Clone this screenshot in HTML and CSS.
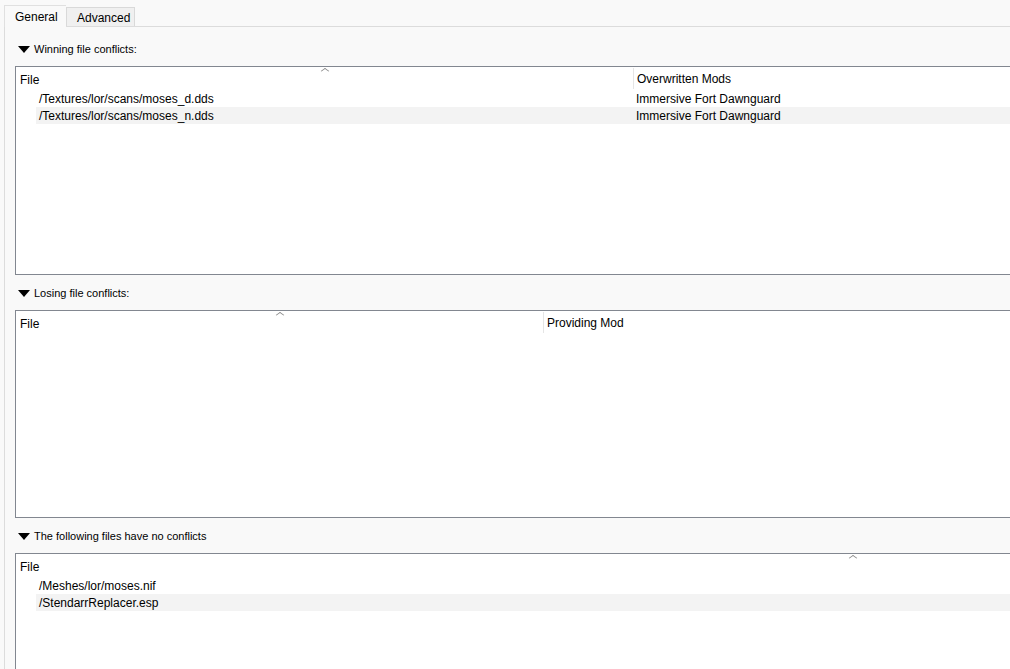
FILE: index.html
```html
<!DOCTYPE html>
<html lang="en">
<head>
    <meta charset="UTF-8">
    <meta name="viewport" content="width=device-width, initial-scale=1.0">
    <title>Conflicts</title>
    <link rel="stylesheet" href="styles.css">
</head>
<body>

<div class="tabs">
    <div class="tab active">General</div>
    <div class="tab">Advanced</div>
</div>

<div class="pane">
    <div class="section-title"><span class="arrow"></span>Winning file conflicts:</div>
    <div class="list">
        <div class="list-head">
            <div class="head-cell col-win">File<span class="sort"></span></div>
            <div class="head-cell col-rest">Overwritten Mods</div>
        </div>
        <div class="row">
            <div class="cell col-win"><span class="item">/Textures/lor/scans/moses_d.dds</span></div>
            <div class="cell col-rest">Immersive Fort Dawnguard</div>
        </div>
        <div class="row alt">
            <div class="cell col-win"><span class="item">/Textures/lor/scans/moses_n.dds</span></div>
            <div class="cell col-rest">Immersive Fort Dawnguard</div>
        </div>
    </div>

    <div class="section-title"><span class="arrow"></span>Losing file conflicts:</div>
    <div class="list list-short">
        <div class="list-head">
            <div class="head-cell col-lose">File<span class="sort"></span></div>
            <div class="head-cell col-rest">Providing Mod</div>
        </div>
    </div>

    <div class="section-title"><span class="arrow"></span>The following files have no conflicts</div>
    <div class="list list-last">
        <div class="list-head">
            <div class="head-cell col-none">File<span class="sort"></span></div>
        </div>
        <div class="row">
            <div class="cell col-none"><span class="item">/Meshes/lor/moses.nif</span></div>
        </div>
        <div class="row alt">
            <div class="cell col-none"><span class="item">/StendarrReplacer.esp</span></div>
        </div>
    </div>
</div>

</body>
</html>
```

FILE: styles.css
```css
body {
    margin: 0;
    background-color: #f9f9f9;
    color: #000000;
    font-family: "Liberation Sans", Arial, sans-serif;
    font-size: 12px;
    overflow: hidden;
    height: 669px;
}

.tabs {
    display: flex;
    align-items: flex-end;
    height: 27px;
    padding-left: 4px;
    box-sizing: border-box;
}

.tab {
    height: 18px;
    line-height: 21px;
    padding: 0 10px;
    width: 47px;
    background-color: #f0f0f0;
    border: 1px solid #d9d9d9;
    border-bottom: none;
    margin-bottom: 1px;
    text-align: center;
}

.tab.active {
    height: 21px;
    line-height: 23px;
    width: 41px;
    background-color: #f9f9f9;
    border-color: #e0e0e0;
    border-right: none;
    margin-bottom: 0;
    position: relative;
    z-index: 1;
}

.pane {
    margin-left: 4px;
    margin-top: -1px;
    width: 1100px;
    border-top: 1px solid #dcdcdc;
    border-left: 1px solid #dcdcdc;
    padding: 4px 0 0 10px;
    height: 700px;
}

.section-title {
    display: flex;
    align-items: center;
    height: 35px;
    padding-top: 1px;
    box-sizing: border-box;
    font-size: 11px;
}

.arrow {
    width: 0;
    height: 0;
    border-left: 6px solid transparent;
    border-right: 6px solid transparent;
    border-top: 7px solid #000000;
    margin: 0 4px 0 3px;
}

.list {
    height: 209px;
    box-sizing: border-box;
    border: 1px solid #828790;
    background-color: #ffffff;
    overflow: hidden;
}

.list-short {
    height: 208px;
}

.list-last {
    height: 200px;
}

.list-head {
    display: flex;
    height: 23px;
}

.head-cell {
    position: relative;
    height: 23px;
    line-height: 23px;
    padding: 2px 0 0 4px;
    box-sizing: border-box;
    flex-shrink: 0;
}

.head-cell.col-rest {
    height: 21px;
    border-left: 1px solid #e5e5e5;
    margin: 1px 0 1px;
    line-height: 21px;
    padding: 1px 0 0 3px;
}

.sort {
    position: absolute;
    top: 1px;
    left: 50%;
    width: 5px;
    height: 5px;
    margin-left: -3px;
    border-left: 1px solid #8a8a8a;
    border-top: 1px solid #8a8a8a;
    transform: scale(1, 0.7) rotate(45deg);
}

.col-win { width: 617px; }
.col-lose { width: 527px; }
.col-none { width: 1674px; }
.col-rest { width: 600px; }

.row {
    display: flex;
    height: 17px;
}

.cell {
    flex-shrink: 0;
    height: 17px;
    line-height: 17px;
    white-space: nowrap;
    box-sizing: border-box;
}

.cell.col-rest {
    padding: 1px 0 0 3px;
}

.item {
    display: block;
    height: 17px;
    margin-left: 20px;
    padding: 1px 0 0 3px;
    box-sizing: border-box;
}

.row.alt .item,
.row.alt .col-rest {
    background-color: #f3f3f3;
}
```
